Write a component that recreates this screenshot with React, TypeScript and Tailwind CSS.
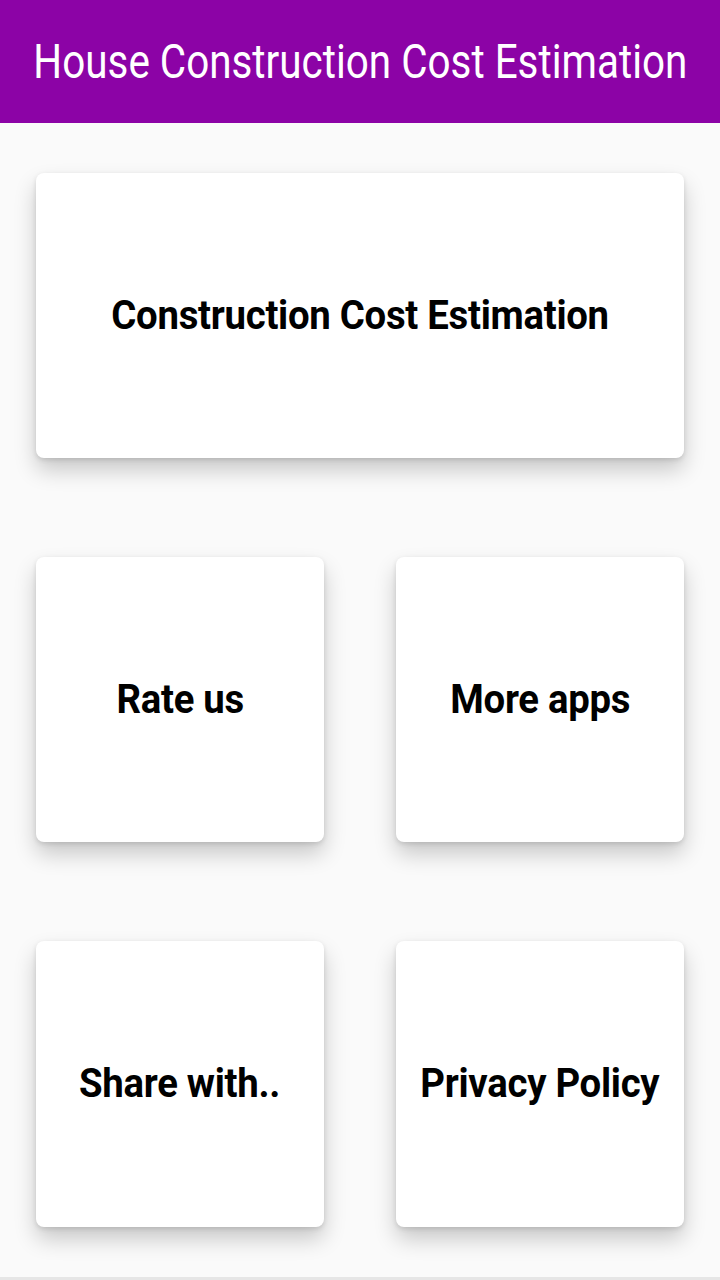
import React from "react";

const Card = ({ label, className = "" }: { label: string; className?: string }) => (
  <div
    className={`flex items-center justify-center bg-white rounded-[8px] shadow-[0_12px_22px_rgba(0,0,0,0.2),0_2px_5px_rgba(0,0,0,0.12)] ${className}`}
  >
    <span
      className="text-[41px] font-bold text-black tracking-[-0.3px] scale-x-[0.935] whitespace-nowrap"
      style={{ fontFamily: "Roboto, sans-serif" }}
    >
      {label}
    </span>
  </div>
);

export default function App() {
  return (
    <div className="w-[720px] h-[1280px] bg-[#fafafa] flex flex-col" style={{ fontFamily: "Roboto, sans-serif" }}>
      <div className="h-[123px] bg-[#8c03a6] flex items-center justify-center shrink-0">
        <span className="text-[48px] text-white leading-none scale-x-[0.842] whitespace-nowrap">
          House Construction Cost Estimation
        </span>
      </div>
      <div className="flex-1 flex flex-col px-[36px] pt-[50px]">
        <Card label="Construction Cost Estimation" className="h-[285px]" />
        <div className="grid grid-cols-2 gap-x-[72px] mt-[99px]">
          <Card label="Rate us" className="h-[285px]" />
          <Card label="More apps" className="h-[285px]" />
        </div>
        <div className="grid grid-cols-2 gap-x-[72px] mt-[99px]">
          <Card label="Share with.." className="h-[286px]" />
          <Card label="Privacy Policy" className="h-[286px]" />
        </div>
      </div>
      <div className="h-[3px] bg-[#e6e6e6] shrink-0" />
    </div>
  );
}
